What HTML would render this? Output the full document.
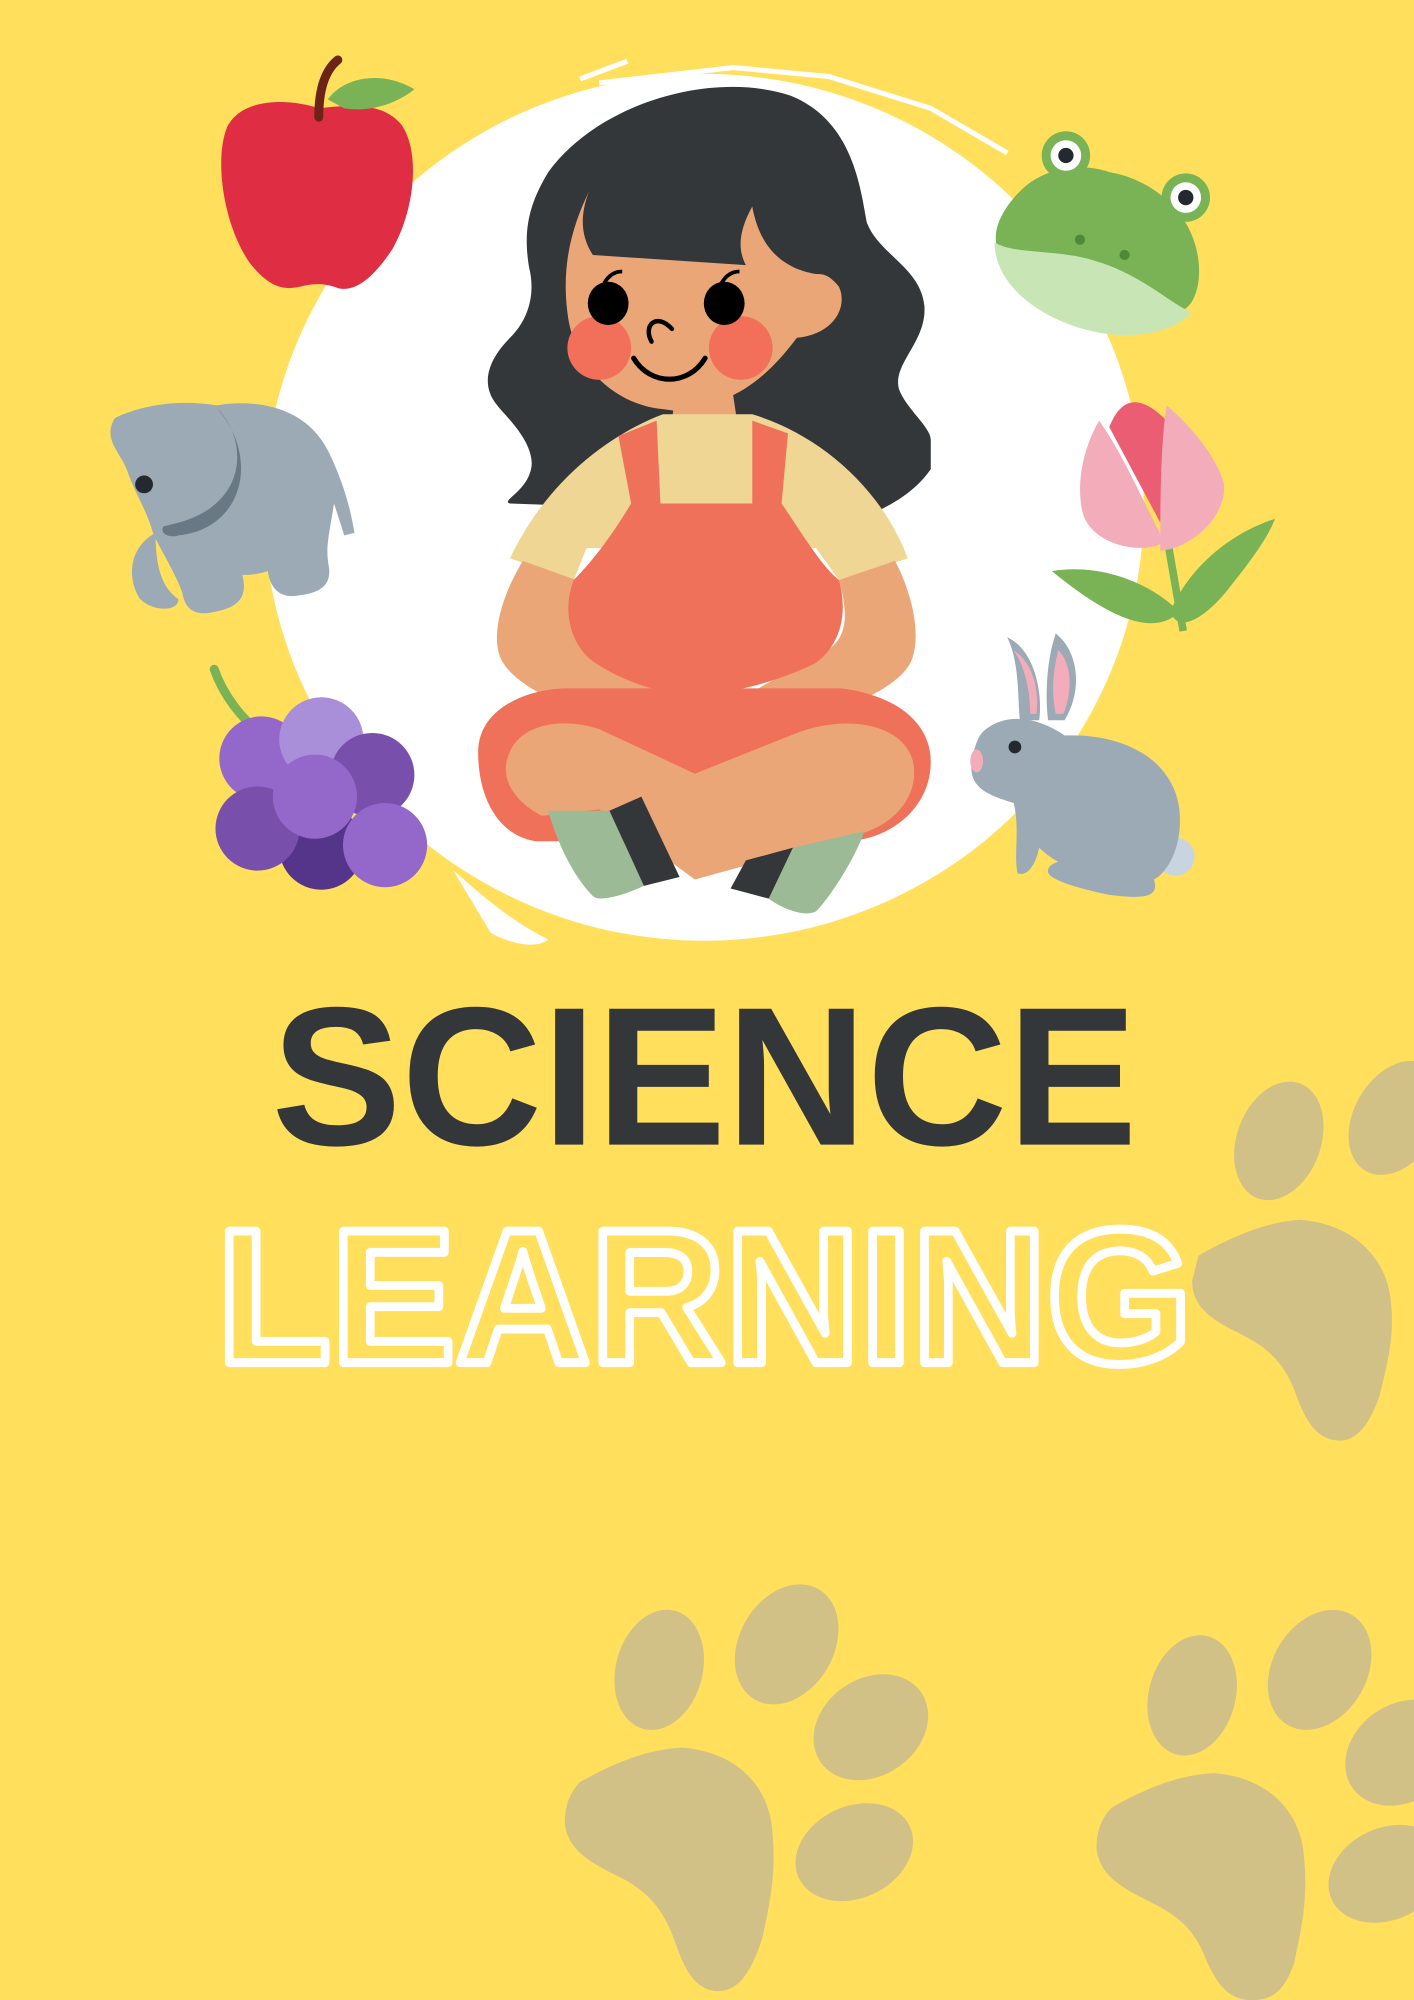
<!DOCTYPE html>
<html><head><meta charset="utf-8"><style>
html,body{margin:0;padding:0;background:#FFDF5C;}
svg{display:block}
</style></head><body>
<svg width="1414" height="2000" viewBox="0 0 1109 1569" preserveAspectRatio="none" xmlns="http://www.w3.org/2000/svg">
<rect width="1109" height="1569" fill="#FFDF5C"/>
<!-- paws -->
<g fill="#D1C186">
 <ellipse cx="1003" cy="895" rx="33" ry="48" transform="rotate(20 1003 895)"/>
 <ellipse cx="1095" cy="877" rx="33" ry="48" transform="rotate(30 1095 877)"/>
 <path d="M940,985 C975,965 1000,958 1020,957 C1060,960 1085,985 1090,1015 C1095,1045 1088,1070 1082,1095 C1075,1115 1065,1132 1048,1130 C1030,1128 1022,1110 1015,1090 C1005,1065 990,1055 970,1045 C950,1035 935,1025 935,1005 Z"/>
 <ellipse cx="517" cy="1310" rx="34" ry="48" transform="rotate(15 517 1310)"/>
 <ellipse cx="617" cy="1290" rx="37" ry="50" transform="rotate(30 617 1290)"/>
 <ellipse cx="683" cy="1355" rx="48" ry="38" transform="rotate(-35 683 1355)"/>
 <ellipse cx="670" cy="1453" rx="48" ry="36" transform="rotate(-25 670 1453)"/>
 <path d="M455,1398 C490,1378 515,1372 535,1371 C575,1374 600,1398 605,1430 C610,1470 603,1495 598,1520 C590,1545 580,1563 562,1562 C544,1561 536,1542 530,1525 C520,1495 505,1482 485,1472 C465,1462 445,1452 443,1430 C443,1415 448,1405 455,1398Z"/>
 <ellipse cx="935" cy="1330" rx="34" ry="48" transform="rotate(15 935 1330)"/>
 <ellipse cx="1035" cy="1310" rx="37" ry="50" transform="rotate(30 1035 1310)"/>
 <ellipse cx="1100" cy="1375" rx="48" ry="38" transform="rotate(-35 1100 1375)"/>
 <ellipse cx="1088" cy="1470" rx="48" ry="36" transform="rotate(-25 1088 1470)"/>
 <path d="M872,1418 C907,1398 932,1392 952,1391 C992,1394 1017,1418 1022,1450 C1027,1490 1020,1515 1015,1540 C1007,1563 997,1570 979,1569 C961,1568 953,1552 947,1540 C937,1512 922,1502 902,1492 C882,1482 862,1472 860,1450 C860,1435 865,1425 872,1418Z"/>
</g>
<!-- white circle -->
<ellipse cx="552" cy="398" rx="345" ry="340" fill="#fff"/>
<path d="M455,62 L492,48 M470,65 L575,53 L650,60 L730,85 L790,120" stroke="#fff" stroke-width="4" fill="none"/>
<path d="M355,682 C380,705 405,725 430,737 C420,745 400,740 385,732 Z" fill="#fff"/>
<!-- apple -->
<path d="M250,85 C230,78 190,75 178,100 C168,125 175,175 195,205 C210,225 222,228 235,225 C245,222 255,222 265,226 C280,230 295,215 308,195 C325,165 330,120 315,98 C300,80 275,82 250,85Z" fill="#DF2E44"/>
<path d="M250,92 C250,70 255,55 265,47" stroke="#6B2415" stroke-width="7" fill="none" stroke-linecap="round"/>
<path d="M257,78 C270,60 300,55 325,70 C310,82 290,88 270,85 Z" fill="#7AB356"/>
<!-- elephant -->
<path d="M90,328 C110,318 140,313 170,318 C200,313 240,318 258,355 C270,380 275,400 278,418 L270,420 L262,395 C258,420 255,430 258,445 C260,460 250,465 235,467 C220,470 212,462 210,448 C200,451 195,451 190,451 C195,470 185,477 168,480 C152,484 145,477 143,465 C138,450 125,430 120,418 C115,400 105,385 100,370 C95,355 80,345 90,328Z" fill="#9BAAB5"/>
<path d="M170,320 C195,345 195,395 140,410 L128,413 C125,420 135,422 140,420 C190,415 205,360 170,320Z" fill="#687985"/>
<circle cx="113" cy="380" r="7" fill="#24292F"/>
<path d="M122,418 C122,440 125,460 140,470 C140,480 120,480 110,470 C100,455 100,430 122,418Z" fill="#9BAAB5"/>
<!-- grapes -->
<path d="M168,525 C175,545 190,565 205,575" stroke="#7AB356" stroke-width="7" fill="none" stroke-linecap="round"/>
<g>
 <circle cx="252" cy="665" r="33" fill="#553589"/>
 <circle cx="205" cy="595" r="33" fill="#9468CB"/>
 <circle cx="252" cy="580" r="33" fill="#A98FD9"/>
 <circle cx="292" cy="608" r="33" fill="#7850AB"/>
 <circle cx="202" cy="650" r="33" fill="#7850AB"/>
 <circle cx="247" cy="625" r="33" fill="#9468CB"/>
 <circle cx="302" cy="663" r="33" fill="#9468CB"/>
</g>
<!-- frog -->
<path d="M800,150 C820,130 850,128 870,135 C900,140 925,160 935,185 C945,210 940,235 930,242 C915,250 890,235 860,225 C830,215 795,215 785,200 C775,185 785,165 800,150Z" fill="#7AB356"/>
<path d="M780,190 C795,200 830,195 860,205 C895,215 920,240 935,245 C920,262 880,270 840,255 C800,240 780,215 780,190Z" fill="#C8E6B5"/>
<circle cx="836" cy="122" r="19" fill="#7AB356"/><circle cx="836" cy="122" r="12" fill="#fff"/><circle cx="836" cy="122" r="6" fill="#24292F"/>
<circle cx="930" cy="155" r="19" fill="#7AB356"/><circle cx="930" cy="155" r="12" fill="#fff"/><circle cx="930" cy="155" r="6" fill="#24292F"/>
<circle cx="847" cy="188" r="4" fill="#4E8A35"/><circle cx="882" cy="200" r="4" fill="#4E8A35"/>
<!-- tulip -->
<path d="M915,420 L928,495" stroke="#7AB356" stroke-width="6"/>
<path d="M825,448 C860,442 900,455 925,480 C905,500 870,485 825,448Z" fill="#7AB356"/>
<path d="M1000,407 C960,420 930,450 918,480 C925,500 950,480 965,460 C985,435 995,420 1000,407Z" fill="#7AB356"/>
<path d="M870,335 C880,310 895,310 915,330 L910,410 Z" fill="#EA5D73"/>
<path d="M862,330 C845,360 845,390 850,405 C860,430 900,435 913,425 C895,390 880,355 862,330Z" fill="#F3ACBA"/>
<path d="M915,318 C935,335 955,360 960,380 C962,405 935,430 910,432 C910,395 910,350 915,318Z" fill="#F3ACBA"/>
<!-- bunny -->
<path d="M790,500 C800,520 798,550 800,565 L815,565 C818,545 812,510 790,500Z" fill="#9BAAB5"/>
<path d="M828,497 C820,520 820,550 822,565 L835,565 C850,540 845,510 828,497Z" fill="#9BAAB5"/>
<path d="M795,510 C805,525 808,545 808,560 L813,560 C815,540 810,520 795,510Z" fill="#F3ACBA"/>
<path d="M830,510 C825,530 825,545 828,560 L834,560 C842,540 840,520 830,510Z" fill="#F3ACBA"/>
<circle cx="922" cy="672" r="15" fill="#C9D5DE"/>
<path d="M770,575 C785,560 810,560 835,577 C880,575 920,595 925,635 C928,665 915,685 905,690 C910,705 895,705 870,702 C850,698 820,690 822,683 C822,678 830,676 830,676 C822,672 815,665 815,665 C812,680 805,688 798,685 C795,670 800,650 795,630 C780,625 760,620 762,600 C763,590 766,580 770,575Z" fill="#9BAAB5"/>
<ellipse cx="766" cy="597" rx="5" ry="9" fill="#F3ACBA"/>
<circle cx="796" cy="586" r="5" fill="#24292F"/>
<!-- girl hair -->
<path d="M430,135 C470,80 560,55 620,75 C670,95 675,150 680,175 C690,200 722,210 725,240 C727,268 700,285 705,305 C710,320 730,335 730,345 L730,368 C715,390 690,400 680,405 L400,395 C392,393 415,385 417,365 C418,345 395,325 390,318 C375,300 385,280 400,265 C415,250 420,230 415,210 C410,180 415,160 430,135Z" fill="#343739"/>
<!-- face -->
<path d="M462,150 C450,175 440,205 445,245 C450,290 485,318 520,321 L528,322 L527,330 L578,330 L575,310 C595,300 610,285 625,265 C655,262 665,240 658,225 C650,215 645,215 640,215 C610,210 595,190 590,162 C580,180 578,195 585,208 L465,200 C455,185 455,168 462,150Z" fill="#EBA678"/>
<circle cx="470" cy="273" r="25" fill="#F2705A"/>
<circle cx="581" cy="273" r="25" fill="#F2705A"/>
<ellipse cx="477" cy="238" rx="16" ry="17" fill="#000"/>
<ellipse cx="568" cy="238" rx="16" ry="17" fill="#000"/>
<path d="M474,222 C478,215 483,213 488,213" stroke="#000" stroke-width="3" fill="none"/>
<path d="M566,222 C570,215 575,213 580,213" stroke="#000" stroke-width="3" fill="none"/>
<path d="M511,268 C504,255 515,245 527,258" stroke="#000" stroke-width="3.5" fill="none" stroke-linecap="round"/>
<path d="M497,281 C510,303 540,303 553,281" stroke="#000" stroke-width="4" fill="none" stroke-linecap="round"/>
<!-- shirt -->
<path d="M400,438 C430,375 480,340 520,325 L590,325 C640,340 690,380 712,438 L658,455 L640,430 L460,430 L450,455Z" fill="#EFD694"/>
<!-- arms -->
<path d="M410,440 L452,455 C445,480 445,495 455,505 C470,520 500,530 515,540 C525,548 520,552 505,550 C510,558 505,565 490,560 C480,570 465,565 450,555 C420,545 398,530 392,515 C385,495 395,465 410,440Z" fill="#EBA678"/>
<path d="M702,440 L658,455 C665,480 664,495 655,505 C640,520 610,530 595,540 C585,548 590,552 605,550 C600,558 605,565 620,560 C630,570 645,565 660,555 C690,545 712,530 716,515 C722,495 715,465 702,440Z" fill="#EBA678"/>
<!-- overalls -->
<path d="M485,342 L515,330 L518,395 L590,395 L590,330 L618,340 L613,395 C630,420 645,445 658,455 C665,480 660,505 640,520 C610,535 570,545 545,545 C520,545 490,535 470,522 C448,510 440,480 450,455 C465,440 480,420 495,395Z" fill="#F07159"/>
<path d="M375,590 C375,555 415,540 445,540 L660,540 C700,545 730,565 730,598 C730,632 700,660 660,660 L420,660 C390,655 375,625 375,590Z" fill="#F07159"/>
<!-- legs -->
<path d="M398,595 C405,568 440,562 470,572 L545,607 L625,575 C665,560 708,568 716,597 C722,625 700,648 672,655 L545,690 L470,635 L425,640 C402,628 393,610 398,595Z" fill="#EBA678"/>
<path d="M430,636 L478,636 L505,695 C490,702 470,708 465,703 C452,690 438,665 430,636Z" fill="#9BBA95"/>
<path d="M478,636 L503,625 L533,688 L505,695Z" fill="#343739"/>
<path d="M585,675 L622,665 L603,705 L573,697Z" fill="#343739"/>
<path d="M622,665 L678,652 C670,675 650,705 640,715 C630,720 612,712 603,705Z" fill="#9BBA95"/>
<!-- text -->
<text x="213" y="898" textLength="679" lengthAdjust="spacingAndGlyphs" font-family="Liberation Sans, sans-serif" font-weight="bold" font-size="155" fill="#343739">SCIENCE</text>
<text x="170" y="1069" textLength="765" lengthAdjust="spacingAndGlyphs" font-family="Liberation Sans, sans-serif" font-weight="bold" font-size="150" fill="none" stroke="#fff" stroke-width="7" stroke-linejoin="round">LEARNING</text>
</svg>
</body></html>
